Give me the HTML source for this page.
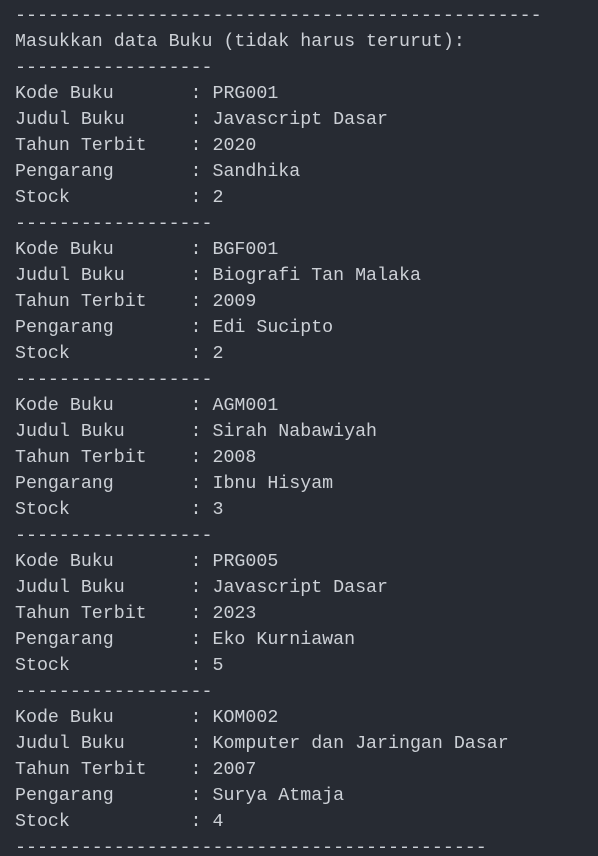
<!DOCTYPE html>
<html><head><style>
html,body{margin:0;padding:0;background:#272b33;width:598px;height:856px;overflow:hidden}
pre{margin:0;padding:3px 0 0 15px;font-family:"Liberation Mono",monospace;font-size:18.3px;line-height:26px;color:#ccd0d6}
</style></head><body><pre>------------------------------------------------
Masukkan data Buku (tidak harus terurut):
------------------
Kode Buku       : PRG001
Judul Buku      : Javascript Dasar
Tahun Terbit    : 2020
Pengarang       : Sandhika
Stock           : 2
------------------
Kode Buku       : BGF001
Judul Buku      : Biografi Tan Malaka
Tahun Terbit    : 2009
Pengarang       : Edi Sucipto
Stock           : 2
------------------
Kode Buku       : AGM001
Judul Buku      : Sirah Nabawiyah
Tahun Terbit    : 2008
Pengarang       : Ibnu Hisyam
Stock           : 3
------------------
Kode Buku       : PRG005
Judul Buku      : Javascript Dasar
Tahun Terbit    : 2023
Pengarang       : Eko Kurniawan
Stock           : 5
------------------
Kode Buku       : KOM002
Judul Buku      : Komputer dan Jaringan Dasar
Tahun Terbit    : 2007
Pengarang       : Surya Atmaja
Stock           : 4
-------------------------------------------</pre></body></html>
